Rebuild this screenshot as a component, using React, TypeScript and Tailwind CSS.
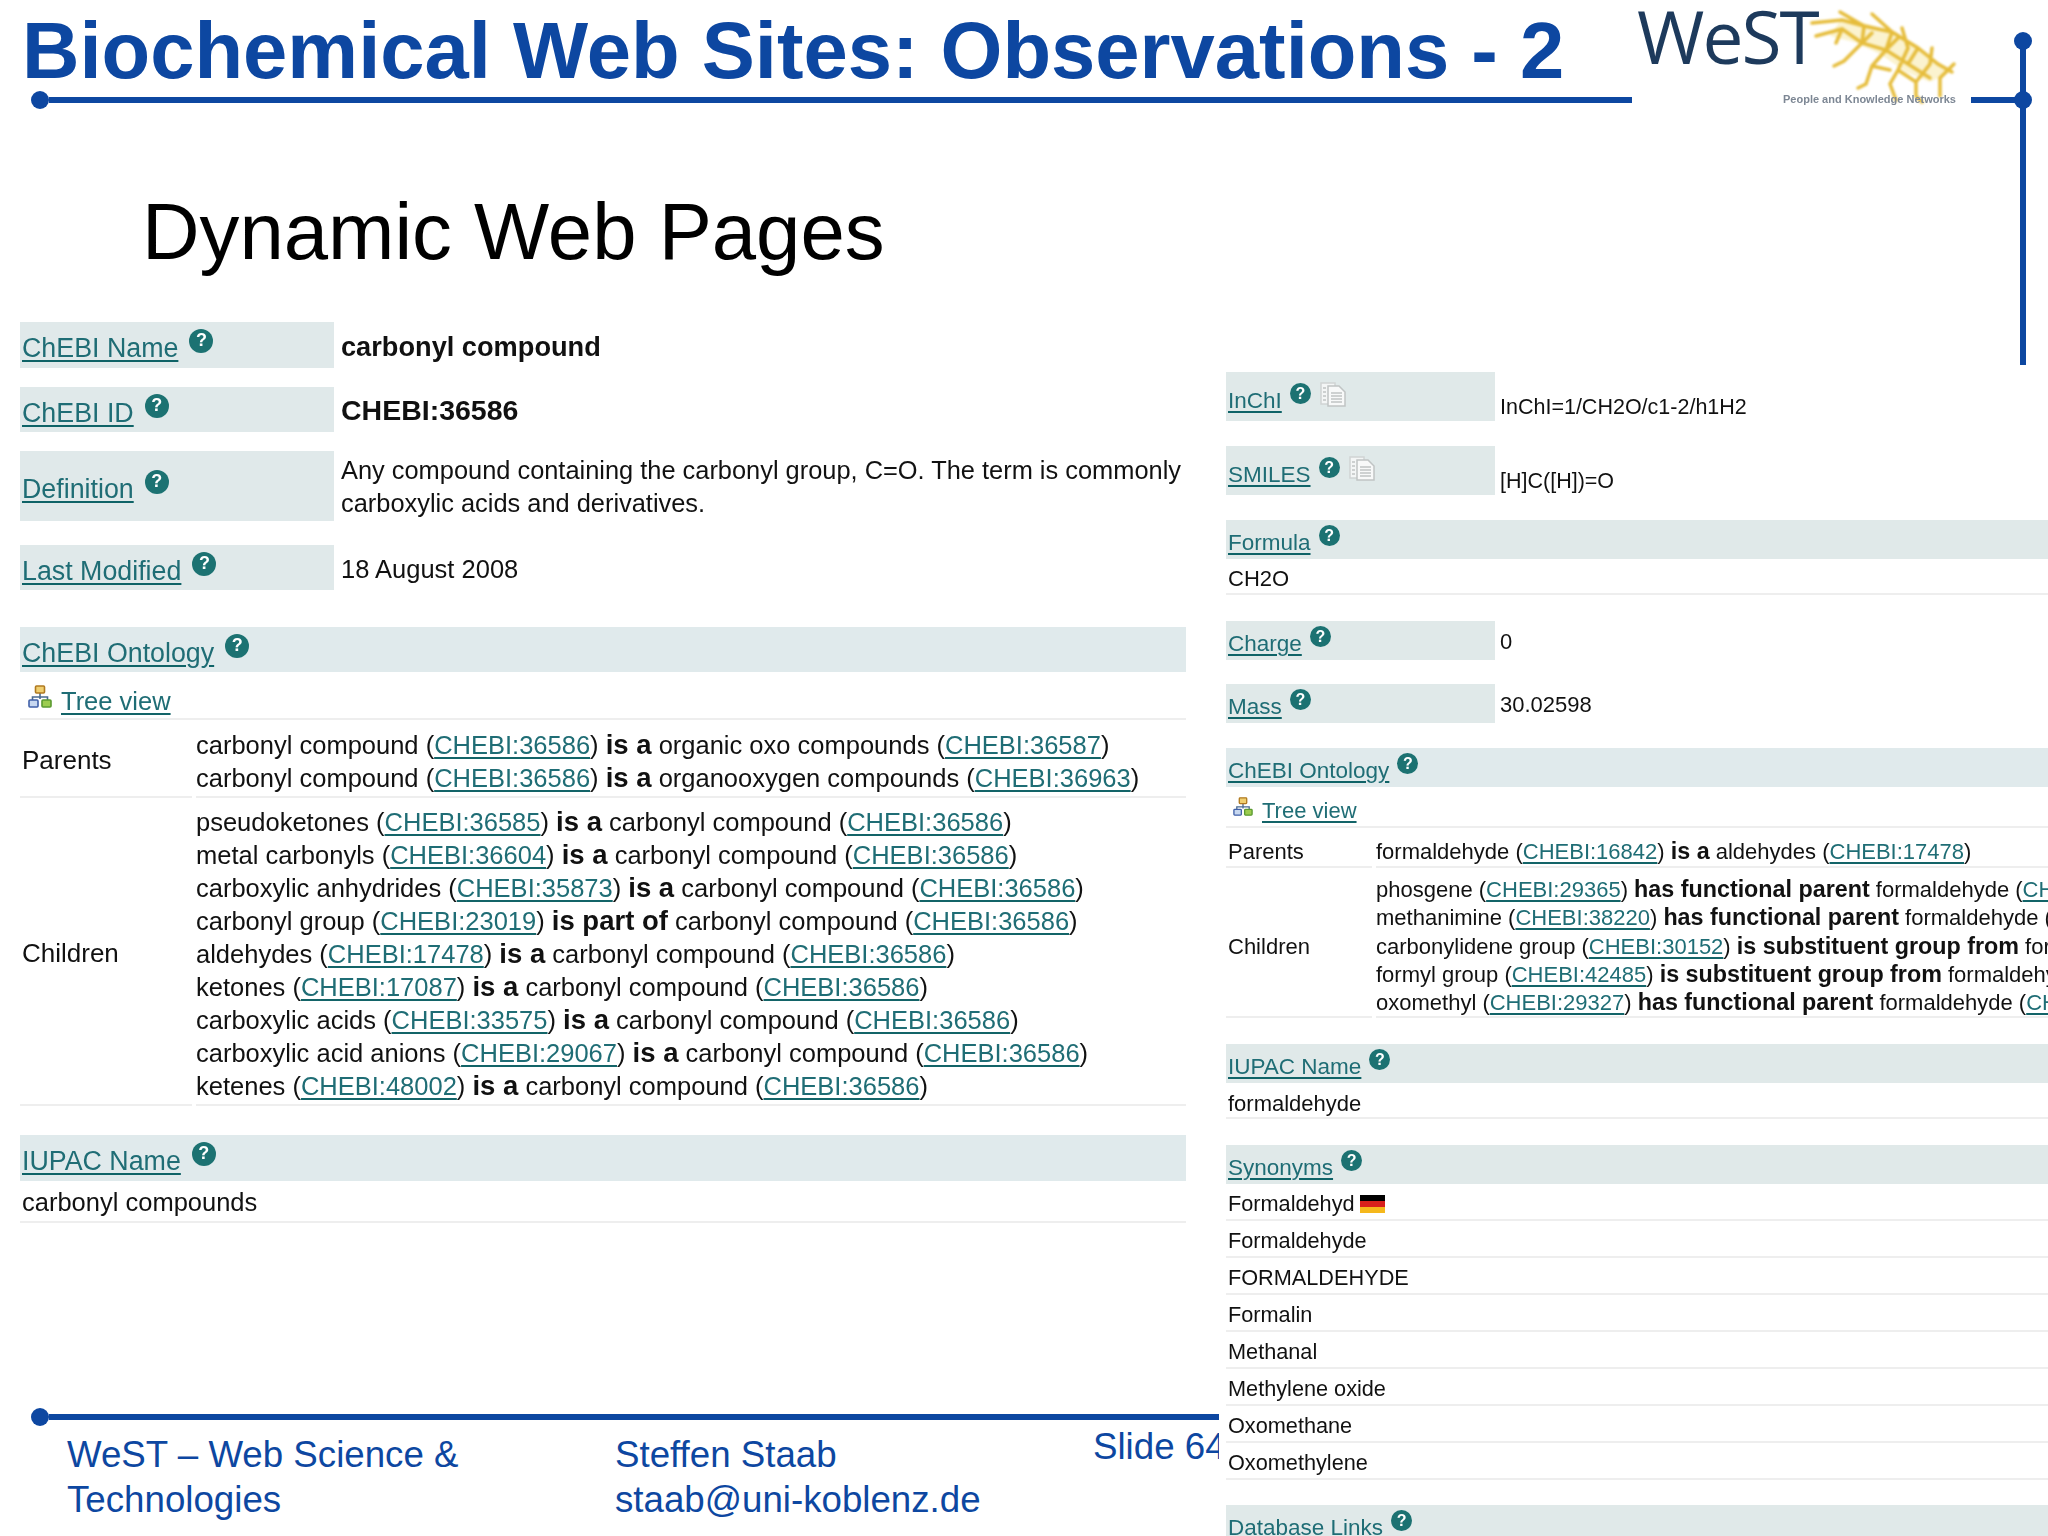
const BLUE = "#0d47a1";

type Relation = [string, string, string, string, string];

const leftParents: Relation[] = [
  ["carbonyl compound", "CHEBI:36586", "is a", "organic oxo compounds", "CHEBI:36587"],
  ["carbonyl compound", "CHEBI:36586", "is a", "organooxygen compounds", "CHEBI:36963"],
];

const leftChildren: Relation[] = [
  ["pseudoketones", "CHEBI:36585", "is a", "carbonyl compound", "CHEBI:36586"],
  ["metal carbonyls", "CHEBI:36604", "is a", "carbonyl compound", "CHEBI:36586"],
  ["carboxylic anhydrides", "CHEBI:35873", "is a", "carbonyl compound", "CHEBI:36586"],
  ["carbonyl group", "CHEBI:23019", "is part of", "carbonyl compound", "CHEBI:36586"],
  ["aldehydes", "CHEBI:17478", "is a", "carbonyl compound", "CHEBI:36586"],
  ["ketones", "CHEBI:17087", "is a", "carbonyl compound", "CHEBI:36586"],
  ["carboxylic acids", "CHEBI:33575", "is a", "carbonyl compound", "CHEBI:36586"],
  ["carboxylic acid anions", "CHEBI:29067", "is a", "carbonyl compound", "CHEBI:36586"],
  ["ketenes", "CHEBI:48002", "is a", "carbonyl compound", "CHEBI:36586"],
];

const rightParents: Relation[] = [
  ["formaldehyde", "CHEBI:16842", "is a", "aldehydes", "CHEBI:17478"],
];

const rightChildren: Relation[] = [
  ["phosgene", "CHEBI:29365", "has functional parent", "formaldehyde", "CHEBI:16842"],
  ["methanimine", "CHEBI:38220", "has functional parent", "formaldehyde", "CHEBI:16842"],
  ["carbonylidene group", "CHEBI:30152", "is substituent group from", "formaldehyde", "CHEBI:16842"],
  ["formyl group", "CHEBI:42485", "is substituent group from", "formaldehyde", "CHEBI:16842"],
  ["oxomethyl", "CHEBI:29327", "has functional parent", "formaldehyde", "CHEBI:16842"],
];

const synonyms = [
  "Formaldehyde",
  "FORMALDEHYDE",
  "Formalin",
  "Methanal",
  "Methylene oxide",
  "Oxomethane",
  "Oxomethylene",
];

function Rule() {
  return (
    <div className="flex items-center">
      <span className="h-[18px] w-[18px] shrink-0 rounded-full bg-[#0d47a1]" />
      <span className="h-[6px] flex-1 bg-[#0d47a1]" />
    </div>
  );
}

function Help({ size, className }: { size: "lg" | "sm"; className: string }) {
  return (
    <span
      className={`flex shrink-0 items-center justify-center rounded-full bg-[#1c7272] font-bold text-white ${
        size === "lg" ? "h-[24px] w-[24px] text-[18px]" : "h-[21px] w-[21px] text-[16px]"
      } ${className}`}
    >
      ?
    </span>
  );
}

function Ref({ children }: { children: string }) {
  return (
    <span className="text-[#1f6d75] underline decoration-[#136468] decoration-2 underline-offset-[3px]">
      {children}
    </span>
  );
}

function Label({ children, size }: { children: string; size: "lg" | "sm" }) {
  return (
    <span className="flex items-center">
      <span
        className={`text-[#1f6d75] underline decoration-[#0f6367] decoration-2 underline-offset-[3px] ${
          size === "lg" ? "pl-[2px] pt-[10px] text-[26.800px]" : "pl-[2px] pt-[9px] text-[22.500px]"
        }`}
      >
        {children}
      </span>
      <Help
        size={size}
        className={size === "lg" ? "ml-[11px] -translate-y-[3px]" : "ml-[8px] -translate-y-[3px]"}
      />
    </span>
  );
}

function RelationLine({ row, boldSize }: { row: Relation; boldSize: string }) {
  return (
    <div className="whitespace-nowrap">
      {row[0]} (<Ref>{row[1]}</Ref>) <b className={`leading-none ${boldSize}`}>{row[2]}</b> {row[3]} (<Ref>{row[4]}</Ref>)
    </div>
  );
}

function TreeIcon({ className }: { className: string }) {
  return (
    <svg viewBox="0 0 24 23" className={className}>
      <path d="M12 8v6M4.500 15v-3h15v3" fill="none" stroke="#4a6a90" strokeWidth="1.600" />
      <rect x="7.500" y="1" width="9" height="7" rx="1" fill="#f0cf70" stroke="#b07a20" strokeWidth="1.600" />
      <rect x="1" y="15" width="9" height="7" rx="1" fill="#c8d8f0" stroke="#4060a8" strokeWidth="1.600" />
      <rect x="14" y="15" width="9" height="7" rx="1" fill="#9ccc50" stroke="#5a9a30" strokeWidth="1.600" />
    </svg>
  );
}

function DocIcon({ className }: { className: string }) {
  return (
    <svg viewBox="0 0 26 25" className={className}>
      <rect x="1" y="1" width="14" height="21" fill="#f4f6f6" stroke="#d0d4d4" strokeWidth="1.500" />
      <path d="M8 4h11l6 6v14H8z" fill="#f8f9f9" stroke="#c0c4c4" strokeWidth="1.500" />
      <path d="M3 6h3M3 10h3M3 14h3M3 18h3M11 11h11M11 14h11M11 17h11M11 20h11" stroke="#c0c4c4" strokeWidth="1.300" />
    </svg>
  );
}

function Logo() {
  return (
    <div className="relative h-[110px] w-[339px] shrink-0">
      <span className="absolute left-[5px] top-[-9px] font-['Open_Sans'] text-[73px] leading-[90px] tracking-[-2px] text-[#1d3a5c] blur-[0.7px]">
        WeST
      </span>
      <svg viewBox="0 0 340 115" className="absolute left-0 top-0 h-[115px] w-[340px] blur-[1px]">
        <path
          d="M210 18l26 6 30 10 28 20 24 18-20 10-24-10-26-18-26-12-24-6z"
          fill="#fbf3cf"
        />
        <path
          d="M180 23l30-3 22 6 28 6 26 16 20 16 14 8M184 36l26-7 20 14 24 7 22 14 22 14M208 12l24 14-2 17-18 18-10 5M240 14l20 18-6 18-14 16-6 18-8 4M270 28l6 20-10 22-8 14 6 16M300 48l-2 16-14 18 0 14 6 6M322 64l-14 14 0 18M210 29l-6 14M230 43l10-10M254 50l12-12M276 64l10-16M240 66l18 4M266 70l18 12"
          fill="none"
          stroke="#e6bd3c"
          strokeWidth="3.500"
          strokeLinecap="round"
        />
      </svg>
      <span className="absolute left-[151px] top-[92px] whitespace-nowrap text-[11px] font-bold leading-[14px] text-[#7d8794] blur-[0.6px]">
        People and Knowledge Networks
      </span>
    </div>
  );
}

function LeftColumn() {
  return (
    <div className="ml-[20px] mt-[44px] flex w-[1166px] flex-col text-[25.500px] leading-[33px] text-[#111] blur-[0.35px]">
      <div className="flex h-[46px]">
        <div className="w-[314px] bg-[#e0e9ea]"><Label size="lg">ChEBI Name</Label></div>
        <b className="ml-[7px] pt-[8px] text-[27.200px]">carbonyl compound</b>
      </div>
      <div className="mt-[19px] flex h-[45px]">
        <div className="w-[314px] bg-[#e0e9ea]"><Label size="lg">ChEBI ID</Label></div>
        <b className="ml-[7px] pt-[7px] text-[28.500px]">CHEBI:36586</b>
      </div>
      <div className="mt-[19px] flex h-[70px]">
        <div className="flex w-[314px] items-center bg-[#e0e9ea] pb-[3px]"><Label size="lg">Definition</Label></div>
        <div className="ml-[7px] w-[845px] overflow-hidden whitespace-nowrap pt-[3px] text-[25.400px]">
          Any compound containing the carbonyl group, C=O. The term is commonly
          <br />
          carboxylic acids and derivatives.
        </div>
      </div>
      <div className="mt-[24px] flex h-[45px]">
        <div className="w-[314px] bg-[#e0e9ea]"><Label size="lg">Last Modified</Label></div>
        <div className="ml-[7px] pt-[8px]">18 August 2008</div>
      </div>
      <div className="mt-[37px] h-[45px] bg-[#e0eaec]"><Label size="lg">ChEBI Ontology</Label></div>
      <div className="flex h-[48px] items-center border-b-2 border-[#eee] pl-[8px] pt-[13px]">
        <TreeIcon className="h-[23px] w-[24px] -translate-y-[5px]" />
        <span className="ml-[9px] text-[#1f6d75] underline decoration-[#136468] decoration-2 underline-offset-[3px]">
          Tree view
        </span>
      </div>
      <div className="grid grid-cols-[172px_990px] gap-x-[4px]">
        <div className="flex items-center border-b-2 border-[#eee] pl-[2px] pt-[5px] text-[26px]">Parents</div>
        <div className="border-b-2 border-[#eee] pb-[1px] pt-[9px]">
          {leftParents.map((row) => (
            <RelationLine key={row[0] + row[3]} row={row} boldSize="text-[27.500px]" />
          ))}
        </div>
        <div className="flex items-center border-b-2 border-[#eee] pl-[2px] pt-[4px] text-[26px]">Children</div>
        <div className="border-b-2 border-[#eee] pb-[1px] pt-[8px]">
          {leftChildren.map((row) => (
            <RelationLine key={row[0]} row={row} boldSize="text-[27.500px]" />
          ))}
        </div>
      </div>
      <div className="mt-[29px] h-[46px] bg-[#e0eaec]"><Label size="lg">IUPAC Name</Label></div>
      <div className="flex h-[42px] items-center border-b-2 border-[#eee] pl-[2px] pt-[3px]">carbonyl compounds</div>
    </div>
  );
}

function RightPanel() {
  return (
    <div className="absolute bottom-0 left-[1219px] right-0 top-[365px] overflow-hidden bg-white pl-[7px] pt-[7px] text-[22px] leading-[28px] text-[#111]">
      <div className="blur-[0.3px]">
        <div className="flex h-[49px]">
          <div className="flex w-[269px] items-start bg-[#e0e9e9] pt-[6px]">
            <Label size="sm">InChI</Label>
            <DocIcon className="ml-[9px] mt-[4px] h-[25px] w-[26px]" />
          </div>
          <div className="ml-[5px] pt-[21px] text-[21.500px]">InChI=1/CH2O/c1-2/h1H2</div>
        </div>
        <div className="mt-[25px] flex h-[49px]">
          <div className="flex w-[269px] items-start bg-[#e0e9e9] pt-[6px]">
            <Label size="sm">SMILES</Label>
            <DocIcon className="ml-[9px] mt-[4px] h-[25px] w-[26px]" />
          </div>
          <div className="ml-[5px] pt-[21px] text-[21.500px]">[H]C([H])=O</div>
        </div>
        <div className="mt-[25px] h-[39px] bg-[#e0e9e9]"><Label size="sm">Formula</Label></div>
        <div className="flex h-[36px] items-center border-b-2 border-[#eee] pl-[2px] pt-[6px]">CH2O</div>
        <div className="mt-[26px] flex h-[39px]">
          <div className="w-[269px] bg-[#e0e9e9]"><Label size="sm">Charge</Label></div>
          <div className="ml-[5px] pt-[7px]">0</div>
        </div>
        <div className="mt-[24px] flex h-[39px]">
          <div className="w-[269px] bg-[#e0e9e9]"><Label size="sm">Mass</Label></div>
          <div className="ml-[5px] pt-[7px]">30.02598</div>
        </div>
        <div className="mt-[25px] h-[39px] bg-[#e0eaec]"><Label size="sm">ChEBI Ontology</Label></div>
        <div className="flex h-[41px] items-center border-b-2 border-[#eee] pl-[7px] pt-[8px]">
          <TreeIcon className="h-[19px] w-[20px] -translate-y-[4px]" />
          <span className="ml-[9px] text-[#1f6d75] underline decoration-[#136468] decoration-2 underline-offset-[3px]">
            Tree view
          </span>
        </div>
        <div className="grid grid-cols-[146px_1fr] gap-x-[4px]">
          <div className="flex h-[40px] items-center border-b-2 border-[#eee] pl-[2px] pt-[9px]">Parents</div>
          <div className="h-[40px] overflow-hidden border-b-2 border-[#eee] pt-[10px]">
            {rightParents.map((row) => (
              <RelationLine key={row[0]} row={row} boldSize="text-[23.300px]" />
            ))}
          </div>
          <div className="flex h-[150px] items-center border-b-2 border-[#eee] pl-[2px] pt-[9px]">Children</div>
          <div className="h-[150px] overflow-hidden border-b-2 border-[#eee] pt-[8px] leading-[28.300px]">
            {rightChildren.map((row) => (
              <RelationLine key={row[0]} row={row} boldSize="text-[23.300px]" />
            ))}
          </div>
        </div>
        <div className="mt-[26px] h-[39px] bg-[#e0e9e9]"><Label size="sm">IUPAC Name</Label></div>
        <div className="flex h-[36px] items-center border-b-2 border-[#eee] pl-[2px] pt-[7px]">formaldehyde</div>
        <div className="mt-[26px] h-[39px] bg-[#e0e9e9]"><Label size="sm">Synonyms</Label></div>
        <div className="flex h-[37px] items-center border-b-2 border-[#eee] pl-[2px] pt-[4px] text-[21.700px]">
          Formaldehyd
          <span className="ml-[5px] flex h-[18px] w-[25px] flex-col">
            <span className="flex-1 bg-black" />
            <span className="flex-1 bg-[#d8201c]" />
            <span className="flex-1 bg-[#f5b81c]" />
          </span>
        </div>
        {synonyms.map((name) => (
          <div key={name} className="flex h-[37px] items-center border-b-2 border-[#eee] pl-[2px] pt-[4px] text-[21.700px]">
            {name}
          </div>
        ))}
        <div className="mt-[25px] h-[39px] bg-[#e0e9e9]"><Label size="sm">Database Links</Label></div>
      </div>
    </div>
  );
}

export default function App() {
  return (
    <div className="relative flex h-[1536px] w-[2048px] flex-col overflow-hidden bg-white font-['Liberation_Sans',Arial,sans-serif]">
      <header className="flex h-[110px]">
        <div className="w-[1632px] pl-[31px]">
          <h1 className="-ml-[9px] h-[91px] whitespace-nowrap pt-[5px] text-[79.600px] font-bold leading-[92px] text-[#0d47a1]">
            Biochemical Web Sites: Observations - 2
          </h1>
          <Rule />
        </div>
        <Logo />
      </header>

      {/* corner ornament on the right of the slide */}
      <svg viewBox="0 0 77 333" className="absolute left-[1971px] top-[32px] h-[333px] w-[77px]">
        <path d="M0 68h52M52 9v324" fill="none" stroke={BLUE} strokeWidth="6" />
        <circle cx="52" cy="9" r="9" fill={BLUE} />
        <circle cx="52" cy="68" r="9" fill={BLUE} />
      </svg>

      <h2 className="ml-[142px] mt-[76px] h-[92px] whitespace-nowrap text-[79.700px] leading-[92px] text-black">
        Dynamic Web Pages
      </h2>

      <LeftColumn />

      <footer className="mt-auto h-[128px] pl-[31px] text-[36.700px] leading-[45px] text-[#0d47a1]">
        <div className="w-[1188px]">
          <Rule />
        </div>
        <div className="mt-[6px] flex">
          <div className="w-[548px] pl-[36px]">
            WeST – Web Science &amp;
            <br />
            Technologies
          </div>
          <div className="w-[478px] pl-[36px]">
            Steffen Staab
            <br />
            staab@uni-koblenz.de
          </div>
          <div className="-mt-[8px] whitespace-nowrap pl-[36px]">Slide 64</div>
        </div>
      </footer>

      <RightPanel />
    </div>
  );
}
